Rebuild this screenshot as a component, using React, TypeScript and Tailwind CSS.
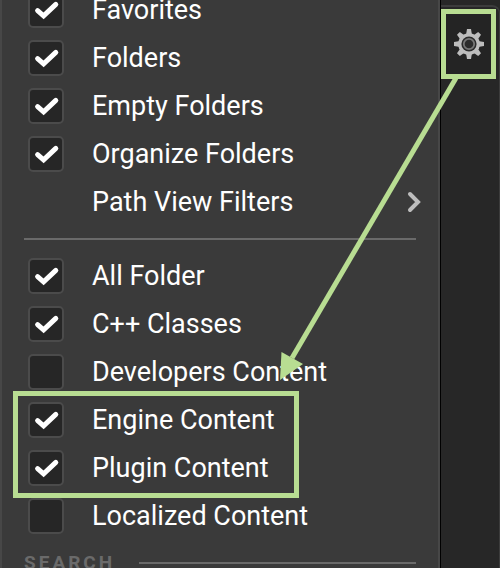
type Item = { label: string; checked: boolean };

const viewItems: Item[] = [
  { label: "Favorites", checked: true },
  { label: "Folders", checked: true },
  { label: "Empty Folders", checked: true },
  { label: "Organize Folders", checked: true },
];

const contentItems: Item[] = [
  { label: "All Folder", checked: true },
  { label: "C++ Classes", checked: true },
  { label: "Developers Content", checked: false },
];

const highlightedItems: Item[] = [
  { label: "Engine Content", checked: true },
  { label: "Plugin Content", checked: true },
];

function CheckItem({ label, checked }: Item) {
  return (
    <label className="flex h-12 items-center gap-7 pl-[26px] text-[27px] leading-8 text-white">
      <span className="grid size-9 shrink-0">
        <input
          type="checkbox"
          defaultChecked={checked}
          className="peer col-start-1 row-start-1 size-9 appearance-none rounded-[5px] border-2 border-[#4b4b4b] bg-[#262626]"
        />
        <svg
          viewBox="0 0 36 36"
          className="pointer-events-none col-start-1 row-start-1 size-9 opacity-0 peer-checked:opacity-100"
          fill="none"
          stroke="#ffffff"
          strokeWidth="5"
          strokeLinecap="round"
        >
          <path d="M9.6 18.6 L15.6 23.8 L27.8 12.4" strokeLinejoin="miter" />
        </svg>
      </span>
      <span className="whitespace-nowrap">{label}</span>
    </label>
  );
}

function GearIcon() {
  const teeth = [0, 45, 90, 135, 180, 225, 270, 315];
  return (
    <svg viewBox="0 0 32 32" className="size-8">
      <g fill="#bdbdbd">
        {teeth.map((a) => (
          <path key={a} d="M13 7 L14 1 H18 L19 7 Z" transform={`rotate(${a} 16 16)`} />
        ))}
        <circle cx="16" cy="16" r="10.8" />
      </g>
      <circle cx="16" cy="16" r="7.6" fill="#2b2b2b" />
      <circle cx="16" cy="16" r="5.2" fill="#2b2b2b" stroke="#777777" strokeWidth="1.8" />
    </svg>
  );
}

export default function App() {
  return (
    <div className="relative flex h-screen overflow-hidden bg-[#272727] font-['Roboto',sans-serif]">
      <div className="min-w-0 flex-1 border-r border-black">
        <div className="h-full overflow-hidden border-x-2 border-[#474747] bg-[#3a3a3a]">
          <div className="-mt-[14px] pr-[22px]">
            {viewItems.map((item) => (
              <CheckItem key={item.label} {...item} />
            ))}
            <button
              type="button"
              className="flex h-12 w-full items-center justify-between pl-[90px] text-left text-[27px] leading-8 whitespace-nowrap text-white"
            >
              Path View Filters
              <svg viewBox="0 0 16 24" className="-mr-1.5 h-6 w-4" fill="none" stroke="#bdbdbd" strokeWidth="4" strokeLinecap="round">
                <path d="M4 4 L12 12 L4 20" />
              </svg>
            </button>
            <hr className="my-3 ml-[22px] border-t-2 border-[#6a6a6a]" />
            {contentItems.map((item) => (
              <CheckItem key={item.label} {...item} />
            ))}
            <div className="relative">
              {highlightedItems.map((item) => (
                <CheckItem key={item.label} {...item} />
              ))}
              <div className="pointer-events-none absolute -top-[5px] -bottom-[6px] left-[11px] w-[286px] border-[5px] border-[#b8dd92]" />
            </div>
            <CheckItem label="Localized Content" checked={false} />
            <div className="mt-[11px] flex items-center gap-6 pl-[22px]">
              <h2 className="text-[19px] leading-6 font-bold tracking-[3px] text-[#6a6a6a]">SEARCH</h2>
              <div className="h-[2px] flex-1 bg-[#6a6a6a]" />
            </div>
          </div>
        </div>
      </div>
      <aside className="w-[59px] pt-[5px]">
        <div className="h-full rounded-tr-lg border-t-2 border-r border-[#3c3c3c] pt-[2px]">
          <button
            type="button"
            aria-label="Settings"
            className="flex h-[70px] w-[55px] items-center justify-center border-[5px] border-[#b8dd92] bg-[#242424]"
          >
            <GearIcon />
          </button>
        </div>
      </aside>
      {/* arrow from the settings button to the highlighted rows */}
      <svg viewBox="0 0 180 310" className="pointer-events-none absolute top-[75px] right-[40px] h-[310px] w-[180px]">
        <path d="M176 3 L12 283" stroke="#b8dd92" strokeWidth="5" />
        <path d="M1.5 277 L0 305 L23 289 Z" fill="#b8dd92" />
      </svg>
    </div>
  );
}
